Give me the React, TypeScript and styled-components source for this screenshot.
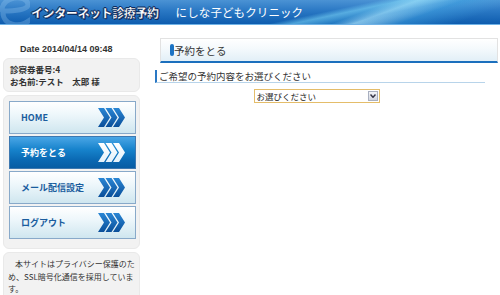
import React, {ReactElement} from 'react';
import styled, {createGlobalStyle} from 'styled-components';

const GlobalStyle = createGlobalStyle`
    html, body {
        margin: 0;
        padding: 0;
        background: #ffffff;
        font-family: "Noto Sans CJK JP", "Liberation Sans", sans-serif;
        color: #333;
    }
`;

type NavItem = {
    label: string;
    active?: boolean;
};

const navItems: NavItem[] = [
    {label: 'HOME'},
    {label: '予約をとる', active: true},
    {label: 'メール配信設定'},
    {label: 'ログアウト'},
];

function Chevrons({active}: {active?: boolean}): ReactElement {
    const id = active ? 'chev-on' : 'chev-off';
    return (
        <ChevronSvg width="27" height="19" viewBox="0 0 27 19">
            <defs>
                <linearGradient id={id} x1="0" y1="0" x2="0" y2="1">
                    <stop offset="0" stopColor={active ? '#ffffff' : '#2a86d4'} />
                    <stop offset="1" stopColor={active ? '#e4f2fb' : '#0a4f9a'} />
                </linearGradient>
            </defs>
            {[0, 7.5, 15].map((x) => (
                <polygon
                    key={x}
                    fill={`url(#${id})`}
                    points={`${x},0 ${x + 6},0 ${x + 12},9.5 ${x + 6},19 ${x},19 ${x + 6},9.5`}
                />
            ))}
        </ChevronSvg>
    );
}

function LogoSwirl(): ReactElement {
    return (
        <LogoSvg width="30" height="24" viewBox="0 0 30 24">
            <path
                d="M2 10 C2 -4 26 -6 28 4 C29 10 14 11 3 11 M3 11 C2 26 20 28 30 20"
                fill="none"
                stroke="rgba(150, 200, 240, 0.32)"
                strokeWidth="5"
                strokeLinecap="round"
            />
        </LogoSvg>
    );
}

export default function App(): ReactElement {
    return (
        <Page>
            <GlobalStyle />
            <Header>
                <LogoSwirl />
                <LogoTitle>インターネット診療予約</LogoTitle>
                <ClinicName>にしな子どもクリニック</ClinicName>
            </Header>
            <Body>
                <Sidebar>
                    <DateLine>Date 2014/04/14 09:48</DateLine>
                    <Panel>
                        <PatientInfo>
                            診察券番号:4
                            <br />
                            お名前:テスト　太郎 様
                        </PatientInfo>
                    </Panel>
                    <NavPanel>
                        {navItems.map((item) => (
                            <NavButton key={item.label} active={item.active}>
                                <span>{item.label}</span>
                                <Chevrons active={item.active} />
                            </NavButton>
                        ))}
                    </NavPanel>
                    <Panel>
                        <Notice>
                            <Indent>本サイトはプライバシー保護のた</Indent>
                            <br />
                            め、SSL暗号化通信を採用していま
                            <br />
                            す。
                        </Notice>
                    </Panel>
                </Sidebar>
                <Main>
                    <TitleBar>
                        <TitleMark />
                        予約をとる
                    </TitleBar>
                    <SubHeading>ご希望の予約内容をお選びください</SubHeading>
                    <SelectRow>
                        <FakeSelect>
                            <span>お選びください</span>
                            <SelectArrow>
                                <svg width="6" height="4" viewBox="0 0 6 4">
                                    <path d="M0.5 0.5 L3 3.3 L5.5 0.5" fill="none" stroke="#334" strokeWidth="1.4" />
                                </svg>
                            </SelectArrow>
                        </FakeSelect>
                    </SelectRow>
                </Main>
            </Body>
        </Page>
    );
}

const Page = styled.div`
    width: 500px;
    height: 295px;
    overflow: hidden;
`;

const Header = styled.header`
    height: 24px;
    display: flex;
    align-items: center;
    overflow: hidden;
    border-bottom: 1px solid #6fb2e6;
    background:
        linear-gradient(168deg, transparent 0 62%, rgba(120, 210, 245, 0.6) 66%, rgba(40, 150, 220, 0.25) 74%, transparent 80%),
        linear-gradient(160deg, transparent 0 70%, rgba(190, 235, 252, 0.75) 74%, rgba(70, 170, 230, 0.45) 82%, transparent 92%),
        linear-gradient(180deg, #4b93d4 0%, #2a78c4 45%, #0e5cae 100%);
`;

const LogoSvg = styled.svg`
    display: block;
    flex-shrink: 0;
`;

const LogoTitle = styled.span`
    margin-left: 1px;
    font-size: 12px;
    font-weight: 900;
    color: #ffffff;
    letter-spacing: -0.4px;
    -webkit-text-stroke: 0.4px #0a2c60;
    text-shadow: 1px 1px 0 #0a2c60, -1px 0 0 #0a2c60, 0 -1px 0 #0a2c60, 1px 0 0 #0a2c60;
`;

const ClinicName = styled.span`
    margin-left: 17px;
    font-size: 11.5px;
    color: #ffffff;
    letter-spacing: 0.1px;
`;

const Body = styled.div`
    display: flex;
    align-items: flex-start;
`;

const Sidebar = styled.aside`
    width: 137px;
    margin-left: 3px;
    display: flex;
    flex-direction: column;
    gap: 3px;
`;

const DateLine = styled.div`
    margin-top: 20px;
    margin-bottom: 1px;
    padding-left: 17px;
    font-family: "Liberation Sans", sans-serif;
    font-size: 9px;
    font-weight: bold;
    color: #333;
    height: 9px;
    line-height: 9px;
`;

const Panel = styled.div`
    background: #f2f2f2;
    border: 1px solid #e9e9e9;
    border-radius: 6px;
`;

const PatientInfo = styled.div`
    padding: 4px 5px 4px 6px;
    font-size: 8.5px;
    line-height: 12px;
    font-weight: bold;
    color: #333;
`;

const NavPanel = styled(Panel)`
    padding: 5px 3px 9px 5px;
    display: flex;
    flex-direction: column;
    gap: 2px;
`;

const NavButton = styled.div<{active?: boolean}>`
    height: 33px;
    box-sizing: border-box;
    border: 1px solid ${({active}): string => (active ? '#3d78b0' : '#88a9c9')};
    background: ${({active}): string =>
        active
            ? 'linear-gradient(180deg, #4aa6e6 0%, #1783cc 40%, #0a68b2 75%, #075ca3 100%)'
            : 'linear-gradient(180deg, #ffffff 0%, #eef7fb 40%, #cfe6ef 100%)'};
    display: flex;
    align-items: center;
    justify-content: space-between;
    padding: 0 10px 0 11px;
    font-size: 9px;
    font-weight: bold;
    color: ${({active}): string => (active ? '#ffffff' : '#1a5d9e')};
`;

const ChevronSvg = styled.svg`
    display: block;
`;

const Notice = styled.div`
    padding: 5px 4px 4px 4px;
    font-size: 8px;
    line-height: 12.5px;
    color: #333;
    white-space: nowrap;
    height: 40px;
`;

const Indent = styled.span`
    padding-left: 7px;
`;

const Main = styled.main`
    flex: 1;
    margin-left: 15px;
    margin-right: 2px;
    padding-top: 13px;
    display: flex;
    flex-direction: column;
`;

const TitleBar = styled.div`
    margin-left: 5px;
    height: 22px;
    border: 1px solid #e2e2e2;
    border-bottom: 2px solid #1b6fbd;
    background: linear-gradient(180deg, #ffffff 0%, #f4f9fc 45%, #e2eff7 100%);
    display: flex;
    align-items: center;
    padding-left: 9px;
    font-size: 10.5px;
    color: #333;
`;

const TitleMark = styled.span`
    width: 4px;
    height: 12px;
    border-radius: 2px;
    background: #1b73c4;
`;

const SubHeading = styled.div`
    margin-top: 7px;
    margin-right: 13px;
    border-left: 2px solid #2a78c4;
    border-bottom: 1px solid #b8d4ea;
    padding-left: 2px;
    font-size: 9.5px;
    line-height: 12px;
    height: 12px;
    color: #333;
`;

const SelectRow = styled.div`
    display: flex;
    justify-content: center;
    margin-top: 6px;
    padding-right: 20px;
`;

const FakeSelect = styled.div`
    width: 126px;
    height: 14px;
    box-sizing: border-box;
    border: 1px solid #e4bd6a;
    background: #fff;
    display: flex;
    align-items: center;
    justify-content: space-between;
    padding-left: 2px;
    font-size: 8.5px;
    color: #222;
`;

const SelectArrow = styled.span`
    width: 10px;
    height: 10px;
    margin-right: 1px;
    border: 1px solid #a9b0c0;
    background: linear-gradient(180deg, #f4f5f8, #d2d6e0);
    display: flex;
    align-items: center;
    justify-content: center;
    box-sizing: border-box;
`;
